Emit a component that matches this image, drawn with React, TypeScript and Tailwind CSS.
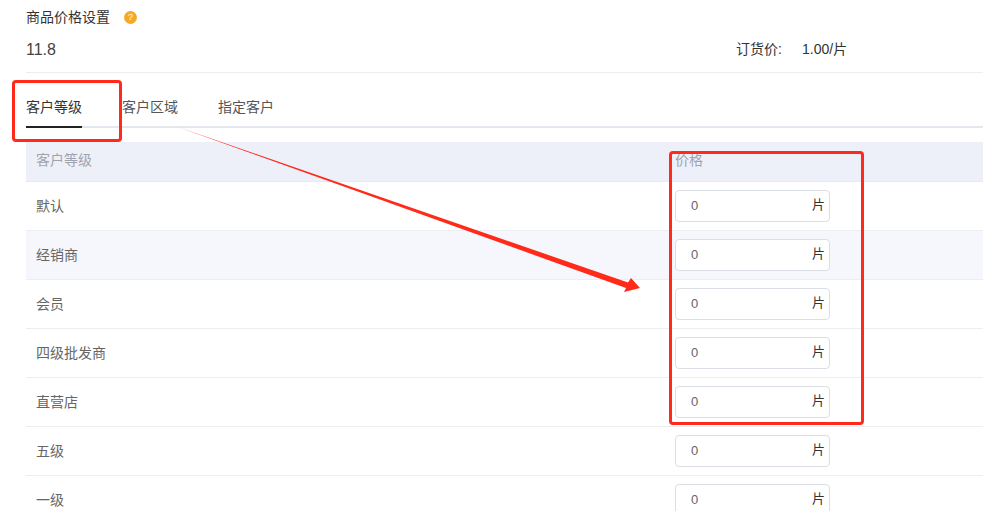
const LEVELS = ["默认", "经销商", "会员", "四级批发商", "直营店", "五级", "一级"];

function PriceInput() {
  return (
    <div className="flex h-[32px] w-[155px] items-center justify-between rounded-[4px] border border-[#dcdee6] bg-white pl-[15px] pr-[4px]">
      <span className="text-[13px] text-[#666666]">0</span>
      <span className="relative top-[-1px] text-[13px] text-[#333333]">片</span>
    </div>
  );
}

export default function App() {
  return (
    <div
      className="relative h-[511px] w-[983px] overflow-hidden bg-white text-[14px]"
      style={{ fontFamily: '"Liberation Sans", "Noto Sans CJK SC", sans-serif' }}
    >
      <div className="pl-[26px]">
        {/* Header */}
        <div className="flex h-[34px] items-center text-[#333333]">
          <span className="text-[14px] leading-[20px]">商品价格设置</span>
          <span className="ml-[14px] flex h-[13px] w-[13px] items-center justify-center rounded-full bg-[#f9a825] text-[9px] leading-none text-white">
            ?
          </span>
        </div>
        <div className="flex h-[39px] items-center border-b border-[#eeeeee] pb-[7px] text-[#333333]">
          <span className="w-[710px] text-[16px] text-[#444444]">11.8</span>
          <span className="w-[66px]">订货价:</span>
          <span>1.00/片</span>
        </div>

        {/* Tabs */}
        <div className="flex h-[55px] items-end border-b-2 border-[#e4e7ed] text-[14px]">
          <div className="relative flex h-[37px] w-[56px] items-start pt-[8px] text-[#333333]">
            客户等级
            <span className="absolute bottom-[-2px] left-0 h-[2px] w-[56px] bg-[#222222]" />
          </div>
          <div className="ml-[40px] flex h-[37px] items-start pt-[8px] text-[#555555]">客户区域</div>
          <div className="ml-[40px] flex h-[37px] items-start pt-[8px] text-[#555555]">指定客户</div>
        </div>

        {/* Table */}
        <div className="mt-[14px]">
          <div className="flex h-[40px] items-center border-b border-[#e8eaf2] bg-[#eef0f9] text-[#a0a3ad]">
            <div className="w-[649px] pb-[2px] pl-[10px]">客户等级</div>
            <div className="pb-[2px]">价格</div>
          </div>
          {LEVELS.map((level, i) => (
            <div
              key={level}
              className={
                i === 1
                  ? "flex h-[49px] items-center border-b border-[#eceef4] bg-[#f6f7fc] text-[#666666]"
                  : "flex h-[49px] items-center border-b border-[#eceef4] bg-white text-[#666666]"
              }
            >
              <div className="w-[649px] pl-[10px]">{level}</div>
              <PriceInput />
            </div>
          ))}
        </div>
      </div>

      {/* Annotations */}
      <div className="absolute left-[12px] top-[80px] h-[62px] w-[110px] rounded-[4px] border-[3px] border-[#ff2a1a]" />
      <div className="absolute left-[669px] top-[151px] h-[274px] w-[195px] rounded-[4px] border-[3px] border-[#ff2a1a]" />
      <svg className="absolute left-0 top-0" width="983" height="511" viewBox="0 0 983 511" fill="none">
        <polygon points="178,127 628,282.5 631,278 640,288 624,292 626,288" fill="#ff2a1a" />
      </svg>
    </div>
  );
}
